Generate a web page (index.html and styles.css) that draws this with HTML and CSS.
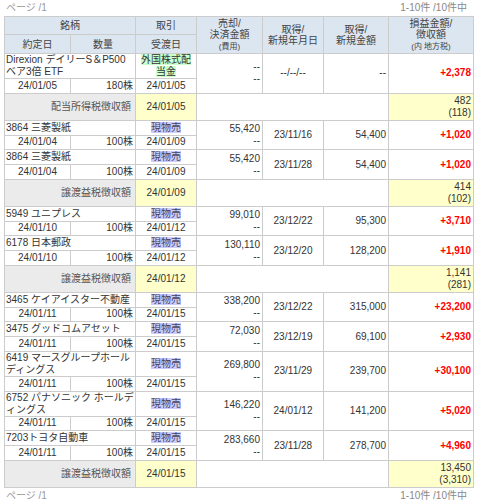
FILE: index.html
```html
<!DOCTYPE html>
<html lang="ja">
  <head>
    <meta charset="UTF-8" />
    <meta name="viewport" content="width=device-width, initial-scale=1.0" />
    <title>約定履歴</title>
    <link rel="stylesheet" href="styles.css">
  </head>
  <body>
    <div class="page-info">
      <span class="page-no">ページ /1</span>
      <span class="count">1-10件 /10件中</span>
    </div>

    <table class="history">
      <colgroup>
        <col class="w-66">
        <col class="w-65">
        <col class="w-61">
        <col class="w-66">
        <col class="w-61">
        <col class="w-65">
        <col class="w-85">
      </colgroup>
      <thead>
        <tr class="head-1">
          <th colspan="2">銘柄</th>
          <th>取引</th>
          <th rowspan="2">売却/<br>決済金額<br><small>(費用)</small></th>
          <th rowspan="2">取得/<br>新規年月日</th>
          <th rowspan="2">取得/<br>新規金額</th>
          <th rowspan="2">損益金額/<br>徴収額<br><small>(内 地方税)</small></th>
        </tr>
        <tr class="head-2">
          <th>約定日</th>
          <th>数量</th>
          <th>受渡日</th>
        </tr>
      </thead>
      <tbody>
        <tr>
          <td colspan="2" class="name">Direxion デイリーS＆P500ベア3倍 ETF</td>
          <td class="center"><span class="tag-div">外国株式配当金</span></td>
          <td rowspan="2" class="num">--<br>--</td>
          <td rowspan="2" class="center">--/--/--</td>
          <td rowspan="2" class="num">--</td>
          <td rowspan="2" class="num gain">+2,378</td>
        </tr>
        <tr>
          <td class="center">24/01/05</td>
          <td class="num">180株</td>
          <td class="center">24/01/05</td>
        </tr>
        <tr class="tax">
          <td colspan="2" class="tax-label">配当所得税徴収額</td>
          <td class="tax-date">24/01/05</td>
          <td colspan="3"></td>
          <td class="tax-sum">482<br>(118)</td>
        </tr>

        <tr>
          <td colspan="2" class="name">3864 三菱製紙</td>
          <td class="center"><span class="tag-sell">現物売</span></td>
          <td rowspan="2" class="num">55,420<br>--</td>
          <td rowspan="2" class="center">23/11/16</td>
          <td rowspan="2" class="num">54,400</td>
          <td rowspan="2" class="num gain">+1,020</td>
        </tr>
        <tr>
          <td class="center">24/01/04</td>
          <td class="num">100株</td>
          <td class="center">24/01/09</td>
        </tr>
        <tr>
          <td colspan="2" class="name">3864 三菱製紙</td>
          <td class="center"><span class="tag-sell">現物売</span></td>
          <td rowspan="2" class="num">55,420<br>--</td>
          <td rowspan="2" class="center">23/11/28</td>
          <td rowspan="2" class="num">54,400</td>
          <td rowspan="2" class="num gain">+1,020</td>
        </tr>
        <tr>
          <td class="center">24/01/04</td>
          <td class="num">100株</td>
          <td class="center">24/01/09</td>
        </tr>
        <tr class="tax">
          <td colspan="2" class="tax-label">譲渡益税徴収額</td>
          <td class="tax-date">24/01/09</td>
          <td colspan="3"></td>
          <td class="tax-sum">414<br>(102)</td>
        </tr>

        <tr>
          <td colspan="2" class="name">5949 ユニプレス</td>
          <td class="center"><span class="tag-sell">現物売</span></td>
          <td rowspan="2" class="num">99,010<br>--</td>
          <td rowspan="2" class="center">23/12/22</td>
          <td rowspan="2" class="num">95,300</td>
          <td rowspan="2" class="num gain">+3,710</td>
        </tr>
        <tr>
          <td class="center">24/01/10</td>
          <td class="num">100株</td>
          <td class="center">24/01/12</td>
        </tr>
        <tr>
          <td colspan="2" class="name">6178 日本郵政</td>
          <td class="center"><span class="tag-sell">現物売</span></td>
          <td rowspan="2" class="num">130,110<br>--</td>
          <td rowspan="2" class="center">23/12/20</td>
          <td rowspan="2" class="num">128,200</td>
          <td rowspan="2" class="num gain">+1,910</td>
        </tr>
        <tr>
          <td class="center">24/01/10</td>
          <td class="num">100株</td>
          <td class="center">24/01/12</td>
        </tr>
        <tr class="tax">
          <td colspan="2" class="tax-label">譲渡益税徴収額</td>
          <td class="tax-date">24/01/12</td>
          <td colspan="3"></td>
          <td class="tax-sum">1,141<br>(281)</td>
        </tr>

        <tr>
          <td colspan="2" class="name">3465 ケイアイスター不動産</td>
          <td class="center"><span class="tag-sell">現物売</span></td>
          <td rowspan="2" class="num">338,200<br>--</td>
          <td rowspan="2" class="center">23/12/22</td>
          <td rowspan="2" class="num">315,000</td>
          <td rowspan="2" class="num gain">+23,200</td>
        </tr>
        <tr>
          <td class="center">24/01/11</td>
          <td class="num">100株</td>
          <td class="center">24/01/15</td>
        </tr>
        <tr>
          <td colspan="2" class="name">3475 グッドコムアセット</td>
          <td class="center"><span class="tag-sell">現物売</span></td>
          <td rowspan="2" class="num">72,030<br>--</td>
          <td rowspan="2" class="center">23/12/19</td>
          <td rowspan="2" class="num">69,100</td>
          <td rowspan="2" class="num gain">+2,930</td>
        </tr>
        <tr>
          <td class="center">24/01/11</td>
          <td class="num">100株</td>
          <td class="center">24/01/15</td>
        </tr>
        <tr>
          <td colspan="2" class="name">6419 マースグループホールディングス</td>
          <td class="center"><span class="tag-sell">現物売</span></td>
          <td rowspan="2" class="num">269,800<br>--</td>
          <td rowspan="2" class="center">23/11/29</td>
          <td rowspan="2" class="num">239,700</td>
          <td rowspan="2" class="num gain">+30,100</td>
        </tr>
        <tr>
          <td class="center">24/01/11</td>
          <td class="num">100株</td>
          <td class="center">24/01/15</td>
        </tr>
        <tr>
          <td colspan="2" class="name">6752 パナソニック ホールディングス</td>
          <td class="center"><span class="tag-sell">現物売</span></td>
          <td rowspan="2" class="num">146,220<br>--</td>
          <td rowspan="2" class="center">24/01/12</td>
          <td rowspan="2" class="num">141,200</td>
          <td rowspan="2" class="num gain">+5,020</td>
        </tr>
        <tr>
          <td class="center">24/01/11</td>
          <td class="num">100株</td>
          <td class="center">24/01/15</td>
        </tr>
        <tr>
          <td colspan="2" class="name">7203トヨタ自動車</td>
          <td class="center"><span class="tag-sell">現物売</span></td>
          <td rowspan="2" class="num">283,660<br>--</td>
          <td rowspan="2" class="center">23/11/28</td>
          <td rowspan="2" class="num">278,700</td>
          <td rowspan="2" class="num gain">+4,960</td>
        </tr>
        <tr>
          <td class="center">24/01/11</td>
          <td class="num">100株</td>
          <td class="center">24/01/15</td>
        </tr>
        <tr class="tax">
          <td colspan="2" class="tax-label">譲渡益税徴収額</td>
          <td class="tax-date">24/01/15</td>
          <td colspan="3"></td>
          <td class="tax-sum">13,450<br>(3,310)</td>
        </tr>
      </tbody>
    </table>

    <div class="page-info">
      <span class="page-no">ページ /1</span>
      <span class="count">1-10件 /10件中</span>
    </div>
  </body>
</html>
```

FILE: styles.css
```css
* {
  box-sizing: border-box;
}

body {
  margin: 0;
  padding: 0 0 0 4px;
  font-family: "Liberation Sans", Arial, "Noto Sans CJK JP", sans-serif;
  font-size: 10px;
  color: #333;
  background: #fff;
}

.page-info {
  width: 469px;
  height: 16px;
  line-height: 16px;
  display: flex;
  justify-content: space-between;
  padding: 0 6px 0 2px;
  color: #999;
}

.page-info .count {
  color: #888;
}

.history {
  width: 469px;
  border-collapse: collapse;
  table-layout: fixed;
}

.w-66 { width: 66px; }
.w-65 { width: 65px; }
.w-61 { width: 61px; }
.w-85 { width: 85px; }

.history th,
.history td {
  border: 1px solid #ccc;
  padding: 0 2px;
  line-height: 12px;
  box-sizing: content-box;
}

.history th {
  background: #dce6f1;
  font-weight: normal;
  color: #444;
  line-height: 11px;
  text-align: center;
  vertical-align: middle;
}

.history th small {
  font-size: 8px;
}

.head-1 th {
  height: 17px;
}

.head-2 th {
  height: 18px;
}

.history td {
  height: 13.75px;
  vertical-align: middle;
}

.history td.name {
  padding: 0;
  padding-left: 1px;
  text-align: left;
  line-break: loose;
}

.center {
  text-align: center;
}

.num {
  text-align: right;
}

.gain {
  color: #ff0000;
  font-weight: bold;
}

.tag-div {
  background: #ccffcc;
}

.tag-sell {
  background: #ccccff;
  color: #445;
}

.tax td {
  height: 26px;
}

.tax .tax-label {
  background: #ebebeb;
  color: #555;
  text-align: right;
  padding-right: 4px;
}

.tax .tax-date {
  background: #ffffcc;
  text-align: center;
}

.tax .tax-sum {
  background: #ffffcc;
  text-align: right;
}
```
